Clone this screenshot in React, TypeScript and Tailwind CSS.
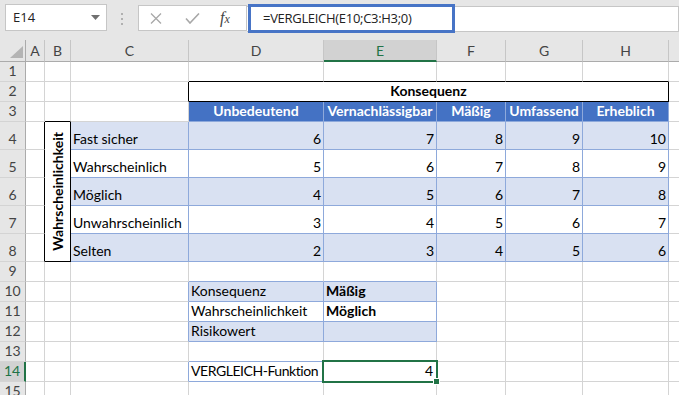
import React from 'react';
import { twMerge } from 'tailwind-merge';
import clsx from 'clsx';

const BASE =
  'box-border flex items-end overflow-hidden whitespace-nowrap border-r border-b border-r-[#d4d4d4] border-b-[#d4d4d4] bg-white px-[2px] pb-[2px] text-[14px] leading-[17px] text-black';
const BAND = 'bg-[#d9e1f2]';
const TB = 'border-r-[#8ea9db] border-b-[#8ea9db]';

function Cell({ className = '', children }: { className?: string; children?: React.ReactNode }) {
  return <div className={twMerge(BASE, className)}>{children}</div>;
}

function RowHead({ n, sel = false }: { n: number; sel?: boolean }) {
  return (
    <div
      className={clsx(
        'box-border flex items-end justify-center border-b border-b-[#d4d4d4] pb-[2px] text-[14px] leading-[17px]',
        sel
          ? 'border-r-2 border-r-[#217346] bg-[#d2d2d2] text-[#217346]'
          : 'border-r border-r-[#ababab] bg-[#e6e6e6] text-[#444]'
      )}
    >
      {n}
    </div>
  );
}

function ColHead({ l, sel = false }: { l: string; sel?: boolean }) {
  return (
    <div
      className={clsx(
        'box-border flex items-center justify-center border-r border-r-[#c6c6c6] text-[14px] leading-[17px]',
        sel
          ? 'border-b-2 border-b-[#217346] bg-[#d2d2d2] text-[#217346]'
          : 'border-b border-b-[#ababab] bg-[#e6e6e6] text-[#444]'
      )}
    >
      {l}
    </div>
  );
}

const heads = ['Unbedeutend', 'Vernachlässigbar', 'Mäßig', 'Umfassend', 'Erheblich'];

const matrix = [
  { label: 'Fast sicher', vals: [6, 7, 8, 9, 10], band: true },
  { label: 'Wahrscheinlich', vals: [5, 6, 7, 8, 9], band: false },
  { label: 'Möglich', vals: [4, 5, 6, 7, 8], band: true },
  { label: 'Unwahrscheinlich', vals: [3, 4, 5, 6, 7], band: false },
  { label: 'Selten', vals: [2, 3, 4, 5, 6], band: true },
];

const inputs = [
  { label: 'Konsequenz', value: 'Mäßig', band: true },
  { label: 'Wahrscheinlichkeit', value: 'Möglich', band: false },
  { label: 'Risikowert', value: '', band: true },
];

function FormulaBar() {
  return (
    <div className="flex h-10 items-start bg-[#e6e6e6] pt-[4px] font-['Open_Sans',sans-serif] text-[13px] text-[#222]">
      <div className="ml-[5px] flex h-[27px] w-[102px] items-center justify-between border border-[#c6c6c6] bg-white pl-[7px] pr-[6px]">
        <span>E14</span>
        <svg width="9" height="5" viewBox="0 0 9 5">
          <path d="M0 0h9L4.5 5z" fill="#707070" />
        </svg>
      </div>
      <div className="ml-[14px] mt-[9px] flex flex-col gap-[3px]">
        <span className="h-[2px] w-[2px] bg-[#b0b0b0]" />
        <span className="h-[2px] w-[2px] bg-[#b0b0b0]" />
        <span className="h-[2px] w-[2px] bg-[#b0b0b0]" />
      </div>
      <div className="ml-[15px] mt-px flex h-[26px] w-[109px] items-center border border-[#c6c6c6] bg-white">
        <svg className="ml-[11px]" width="12" height="11" viewBox="0 0 12 11">
          <path d="M1 0.5l10 10M11 0.5l-10 10" stroke="#a8a8a8" strokeWidth="1.3" />
        </svg>
        <svg className="ml-[23px]" width="15" height="11" viewBox="0 0 15 11">
          <path d="M1 5.5l4 4.5 9-9.5" fill="none" stroke="#a8a8a8" strokeWidth="1.6" />
        </svg>
        <span className="ml-[20px] font-['Liberation_Serif',serif] text-[16px] italic leading-none text-[#444]">
          f<span className="text-[12px]">x</span>
        </span>
      </div>
      <div className="mt-[2px] flex h-[26px] flex-1 items-start border border-l-0 border-[#c6c6c6] bg-white">
        <div className="-mt-[3px] ml-px flex h-[29px] w-[207px] items-center border-[3px] border-[#4774c6] pl-[12px] tracking-[-0.3px]">
          =VERGLEICH(E10;C3:H3;0)
        </div>
      </div>
    </div>
  );
}

export default function App() {
  return (
    <div className="h-[395px] w-[679px] overflow-hidden bg-white font-['Lato',sans-serif]">
      <FormulaBar />
      <div className="grid grid-cols-[26px_19px_26px_118px_135px_113px_69px_77px_86px_20px] grid-rows-[22px_repeat(3,20px)_repeat(5,28px)_repeat(7,20px)]">
        {/* column headers */}
        <div className="box-border flex items-end justify-end border-r border-b border-r-[#ababab] border-b-[#ababab] bg-[#e6e6e6] pb-[3px] pr-[2px]">
          <svg width="13" height="12" viewBox="0 0 13 12">
            <path d="M13 0v12H0z" fill="#b4b4b4" />
          </svg>
        </div>
        {['A', 'B', 'C', 'D', 'E', 'F', 'G', 'H', ''].map((l) => (
          <ColHead key={l || 'I'} l={l} sel={l === 'E'} />
        ))}

        {/* row 1 */}
        <RowHead n={1} />
        <Cell />
        <Cell />
        <Cell />
        {[0, 1, 2, 3, 4].map((i) => (
          <Cell key={i} className="border-b-black" />
        ))}
        <Cell />

        {/* row 2 */}
        <RowHead n={2} />
        <Cell />
        <Cell />
        <Cell className="border-r-black" />
        <Cell className="col-span-5 justify-center border-r-black border-b-black font-bold">Konsequenz</Cell>
        <Cell />

        {/* row 3 */}
        <RowHead n={3} />
        <Cell />
        <Cell className="border-b-black" />
        <Cell />
        {heads.map((h) => (
          <Cell key={h} className={twMerge('justify-center bg-[#4472c4] font-bold text-white', TB)}>
            {h}
          </Cell>
        ))}
        <Cell />

        {/* rows 4-8 */}
        {matrix.map((row, idx) => (
          <React.Fragment key={row.label}>
            <RowHead n={idx + 4} />
            <Cell className="border-r-black" />
            {idx === 0 && (
              <Cell className="row-span-5 items-center justify-center border-r-black border-b-black p-0">
                <span className="rotate-180 font-bold [writing-mode:vertical-rl]">Wahrscheinlichkeit</span>
              </Cell>
            )}
            <Cell className={twMerge(TB, row.band ? BAND : '')}>{row.label}</Cell>
            {row.vals.map((v, i) => (
              <Cell key={i} className={twMerge('justify-end', TB, row.band ? BAND : '')}>
                {v}
              </Cell>
            ))}
            <Cell />
          </React.Fragment>
        ))}

        {/* row 9 */}
        <RowHead n={9} />
        <Cell />
        <Cell />
        <Cell />
        <Cell className="border-b-[#8ea9db]" />
        <Cell className="border-b-[#8ea9db]" />
        <Cell />
        <Cell />
        <Cell />
        <Cell />

        {/* rows 10-12 */}
        {inputs.map((row, idx) => (
          <React.Fragment key={row.label}>
            <RowHead n={idx + 10} />
            <Cell />
            <Cell />
            <Cell className="border-r-[#8ea9db]" />
            <Cell className={twMerge(TB, row.band ? BAND : '')}>{row.label}</Cell>
            <Cell className={twMerge(TB, 'font-bold', row.band ? BAND : '')}>{row.value}</Cell>
            <Cell />
            <Cell />
            <Cell />
            <Cell />
          </React.Fragment>
        ))}

        {/* row 13 */}
        <RowHead n={13} />
        <Cell />
        <Cell />
        <Cell />
        <Cell className="border-b-[#8ea9db]" />
        <Cell />
        <Cell />
        <Cell />
        <Cell />
        <Cell />

        {/* row 14 */}
        <RowHead n={14} sel />
        <Cell />
        <Cell />
        <Cell className="border-r-[#8ea9db]" />
        <Cell className={twMerge(TB, 'tracking-[-0.45px]')}>VERGLEICH-Funktion</Cell>
        <Cell className="relative justify-end overflow-visible pr-[3px]">
          4
          <span className="absolute -left-[2px] -top-[2px] -right-[2px] -bottom-[2px] z-10 border-2 border-[#217346]" />
          <span className="absolute -right-[4px] -bottom-[4px] z-20 h-[7px] w-[7px] border border-white bg-[#217346]" />
        </Cell>
        <Cell />
        <Cell />
        <Cell />
        <Cell />

        {/* row 15 */}
        <RowHead n={15} />
        <Cell />
        <Cell />
        <Cell />
        <Cell />
        <Cell />
        <Cell />
        <Cell />
        <Cell />
        <Cell />
      </div>
    </div>
  );
}
